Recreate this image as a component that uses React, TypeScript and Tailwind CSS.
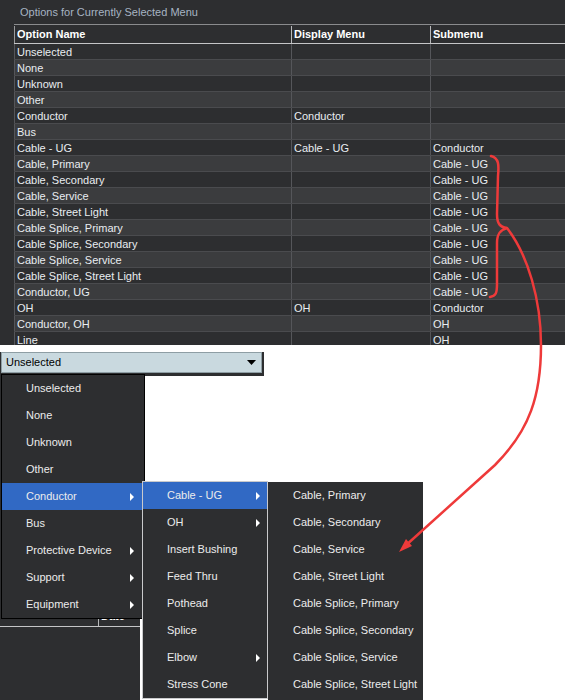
import React from 'react';

// rows of the "Options for Currently Selected Menu" grid: [option, display menu, submenu]
const rows: [string, string, string][] = [
  ['Unselected', '', ''],
  ['None', '', ''],
  ['Unknown', '', ''],
  ['Other', '', ''],
  ['Conductor', 'Conductor', ''],
  ['Bus', '', ''],
  ['Cable - UG', 'Cable - UG', 'Conductor'],
  ['Cable, Primary', '', 'Cable - UG'],
  ['Cable, Secondary', '', 'Cable - UG'],
  ['Cable, Service', '', 'Cable - UG'],
  ['Cable, Street Light', '', 'Cable - UG'],
  ['Cable Splice, Primary', '', 'Cable - UG'],
  ['Cable Splice, Secondary', '', 'Cable - UG'],
  ['Cable Splice, Service', '', 'Cable - UG'],
  ['Cable Splice, Street Light', '', 'Cable - UG'],
  ['Conductor, UG', '', 'Cable - UG'],
  ['OH', 'OH', 'Conductor'],
  ['Conductor, OH', '', 'OH'],
  ['Line', '', 'OH'],
];

interface MenuItem {
  label: string;
  sub?: boolean;
  active?: boolean;
}

const rootMenu: MenuItem[] = [
  { label: 'Unselected' },
  { label: 'None' },
  { label: 'Unknown' },
  { label: 'Other' },
  { label: 'Conductor', sub: true, active: true },
  { label: 'Bus' },
  { label: 'Protective Device', sub: true },
  { label: 'Support', sub: true },
  { label: 'Equipment', sub: true },
];

const conductorMenu: MenuItem[] = [
  { label: 'Cable - UG', sub: true, active: true },
  { label: 'OH', sub: true },
  { label: 'Insert Bushing' },
  { label: 'Feed Thru' },
  { label: 'Pothead' },
  { label: 'Splice' },
  { label: 'Elbow', sub: true },
  { label: 'Stress Cone' },
];

const cableMenu: MenuItem[] = [
  { label: 'Cable, Primary' },
  { label: 'Cable, Secondary' },
  { label: 'Cable, Service' },
  { label: 'Cable, Street Light' },
  { label: 'Cable Splice, Primary' },
  { label: 'Cable Splice, Secondary' },
  { label: 'Cable Splice, Service' },
  { label: 'Cable Splice, Street Light' },
];

const SubArrow = () => (
  <svg width="4" height="8" viewBox="0 0 4 8" className="shrink-0">
    <polygon points="0,0 4,4 0,8" fill="#ffffff" />
  </svg>
);

const MenuRows: React.FC<{ items: MenuItem[]; pad: string }> = ({ items, pad }) => (
  <>
    {items.map((it) => (
      <div
        key={it.label}
        className={`flex h-[27px] items-center justify-between whitespace-nowrap ${pad} text-[11px] text-[#ececec] ${
          it.active ? 'bg-[#3169c4]' : ''
        }`}
      >
        <span>{it.label}</span>
        {it.sub && <SubArrow />}
      </div>
    ))}
  </>
);

export default function App() {
  return (
    <div className="relative h-[700px] w-[565px] overflow-hidden bg-white font-['Liberation_Sans',Arial,sans-serif]">
      {/* options grid panel */}
      <div className="h-[345px] overflow-hidden bg-[#2d2e30]">
        <div className="flex h-[24px] items-center pl-[20px] pt-px text-[11px] text-[#a7b4c3]">
          Options for Currently Selected Menu
        </div>
        <div className="ml-[14px] w-[620px]">
          <div className="flex h-[20px] border-t border-b border-t-[#8a8b8d] border-b-[#c4c5c7] pt-px text-[11px] font-bold text-white">
            <div className="flex w-[277px] items-center border-l border-[#9a9b9d] pl-[2px]">Option Name</div>
            <div className="flex w-[139px] items-center border-l border-[#b8b9bb] pl-[2px]">Display Menu</div>
            <div className="flex w-[200px] items-center border-l border-[#b8b9bb] pl-[2px]">Submenu</div>
          </div>
          {rows.map(([name, display, sub], i) => (
            <div
              key={name}
              className={`flex h-[16px] whitespace-nowrap border-b border-[#4a4b4e] text-[11px] leading-[16px] text-[#e9edf1] ${
                i % 2 === 0 ? 'bg-[#2d2e30]' : 'bg-[#3b3c3e]'
              }`}
            >
              <div className="w-[277px] border-l border-[#55565a] pl-[2px]">{name}</div>
              <div className="w-[139px] border-l border-[#55565a] pl-[2px]">{display}</div>
              <div className="w-[200px] border-l border-[#55565a] pl-[2px]">{sub}</div>
            </div>
          ))}
        </div>
      </div>

      {/* lower area: combo box, panel behind, cascading menus */}
      <div className="relative h-[355px]">
        <div className="pt-[7px]">
          <div className="h-[24px] w-[264px] bg-[#2d2e30]">
            <div className="ml-[1px] flex h-[21px] w-[261px] items-center justify-between border border-[#8e9ea4] bg-[#c9d9df] pl-[4px] pr-[5px] text-[11px] text-black">
              <span>Unselected</span>
              <svg width="9" height="5" viewBox="0 0 9 5">
                <polygon points="0,0 9,0 4.5,5" fill="#000000" />
              </svg>
            </div>
          </div>
          <div className="h-[324px] w-[140px] bg-[#2d2e30] pt-[231px]">
            <div className="flex h-[20px] border-b border-[#c4c5c7] text-[11px] font-bold text-white">
              <div className="w-[98px]" />
              <div className="flex items-center border-l border-[#b8b9bb] pl-[2px]">Date</div>
            </div>
          </div>
        </div>

        {/* root menu */}
        <div className="absolute left-[1px] top-[29px] w-[144px] border border-black bg-[#2d2e30]">
          <MenuRows items={rootMenu} pad="pl-[24px] pr-[10px]" />
        </div>

        {/* Conductor submenu */}
        <div className="absolute left-[142px] top-[136px] w-[126px] border border-[#c9cacc] bg-[#2d2e30]">
          <MenuRows items={conductorMenu} pad="pl-[24px] pr-[7px]" />
        </div>

        {/* Cable - UG submenu */}
        <div className="absolute left-[268px] top-[137px] h-[220px] w-[155px] bg-[#2d2e30]">
          <MenuRows items={cableMenu} pad="pl-[25px] pr-[4px]" />
        </div>
      </div>

      {/* red annotation: bracket + arrow */}
      <svg className="pointer-events-none absolute left-0 top-0" width="565" height="700" viewBox="0 0 565 700">
        <path
          d="M491,156 C499,158 499,165 498,176 L497,214 C497,224 500,227 507,228 C500,230 497,234 497,243 L497,284 C497,293 496,296 490,297"
          fill="none"
          stroke="#ee3a3a"
          strokeWidth="2.5"
          strokeLinecap="round"
        />
        <path
          d="M507,228 C528,255 541,300 541,345 C541,395 530,430 495,465 L404,547"
          fill="none"
          stroke="#ee3a3a"
          strokeWidth="2.5"
          strokeLinecap="round"
        />
        <polygon points="399,552 412,546 406,539" fill="#ee3a3a" />
      </svg>
    </div>
  );
}
